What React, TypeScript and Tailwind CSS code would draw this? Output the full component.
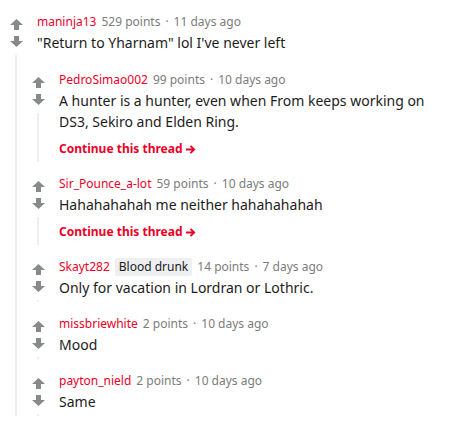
import React from 'react';

type Comment = {
    id: string;
    author: string;
    points: string;
    age: string;
    body: string;
    flair?: string;
    more?: boolean;
    replies?: Comment[];
};

const thread: Comment = {
    id: 'c1',
    author: 'maninja13',
    points: '529 points',
    age: '11 days ago',
    body: '"Return to Yharnam" lol I\'ve never left',
    replies: [
        {
            id: 'c2',
            author: 'PedroSimao002',
            points: '99 points',
            age: '10 days ago',
            body: 'A hunter is a hunter, even when From keeps working on DS3, Sekiro and Elden Ring.',
            more: true,
        },
        {
            id: 'c3',
            author: 'Sir_Pounce_a-lot',
            points: '59 points',
            age: '10 days ago',
            body: 'Hahahahahah me neither hahahahahah',
            more: true,
        },
        {
            id: 'c4',
            author: 'Skayt282',
            flair: 'Blood drunk',
            points: '14 points',
            age: '7 days ago',
            body: 'Only for vacation in Lordran or Lothric.',
        },
        {
            id: 'c5',
            author: 'missbriewhite',
            points: '2 points',
            age: '10 days ago',
            body: 'Mood',
        },
        {
            id: 'c6',
            author: 'payton_nield',
            points: '2 points',
            age: '10 days ago',
            body: 'Same',
        },
    ],
};

const VoteArrow: React.FC<{ down?: boolean }> = ({ down }) => (
    <svg
        width="13"
        height="11"
        viewBox="0 0 13 11"
        className={down ? 'rotate-180' : ''}
        fill="#878a8c"
    >
        <polygon points="6.5,0 13,6 9,6 9,11 4,11 4,6 0,6" />
    </svg>
);

const CommentItem: React.FC<{ comment: Comment }> = ({ comment }) => {
    const leaf = !comment.more && !comment.replies;
    return (
        <div className="flex pt-[12px]">
            {/* vote column + thread line */}
            <div className="w-[22px] shrink-0 flex flex-col items-center">
                <div className="mt-[7px] flex">
                    <VoteArrow />
                </div>
                <div className="mt-[6px] flex">
                    <VoteArrow down />
                </div>
                <div className="mt-[8px] w-[2px] flex-1 bg-[#edeff1]" />
            </div>
            <div className="flex-1 min-w-0">
                <div className={leaf ? 'pl-[10px] pb-[4px]' : 'pl-[10px] pb-[5px]'}>
                    <div className="flex items-center text-xs leading-5 text-[#7c7c7c]">
                        <span className="text-[#ea0027]">{comment.author}</span>
                        {comment.flair && (
                            <span className="ml-[5px] px-[4px] rounded-[2px] bg-[#edeff1] text-[#1a1a1b] leading-[18px]">
                                {comment.flair}
                            </span>
                        )}
                        <span className="ml-[5px]">{comment.points}</span>
                        <span className="mx-[5px]">·</span>
                        <span>{comment.age}</span>
                    </div>
                    <p className="text-sm leading-[21px] text-[#1c1c1c]">{comment.body}</p>
                    {comment.more && (
                        <a className="mt-[9px] flex items-center gap-[2px] text-xs leading-4 font-bold text-[#ea0027]">
                            Continue this thread
                            <svg width="11" height="11" viewBox="0 0 12 12" fill="none" stroke="#ea0027" strokeWidth="2">
                                <path d="M1 6h9M6 2l4 4-4 4" />
                            </svg>
                        </a>
                    )}
                </div>
                {comment.replies?.map((r) => (
                    <CommentItem key={r.id} comment={r} />
                ))}
            </div>
        </div>
    );
};

const App: React.FC = () => {
    return (
        <div className="w-[472px] h-[424px] overflow-hidden bg-white pl-[5px] pr-[30px] font-['Noto_Sans',sans-serif]">
            <CommentItem comment={thread} />
        </div>
    );
};

export default App;
